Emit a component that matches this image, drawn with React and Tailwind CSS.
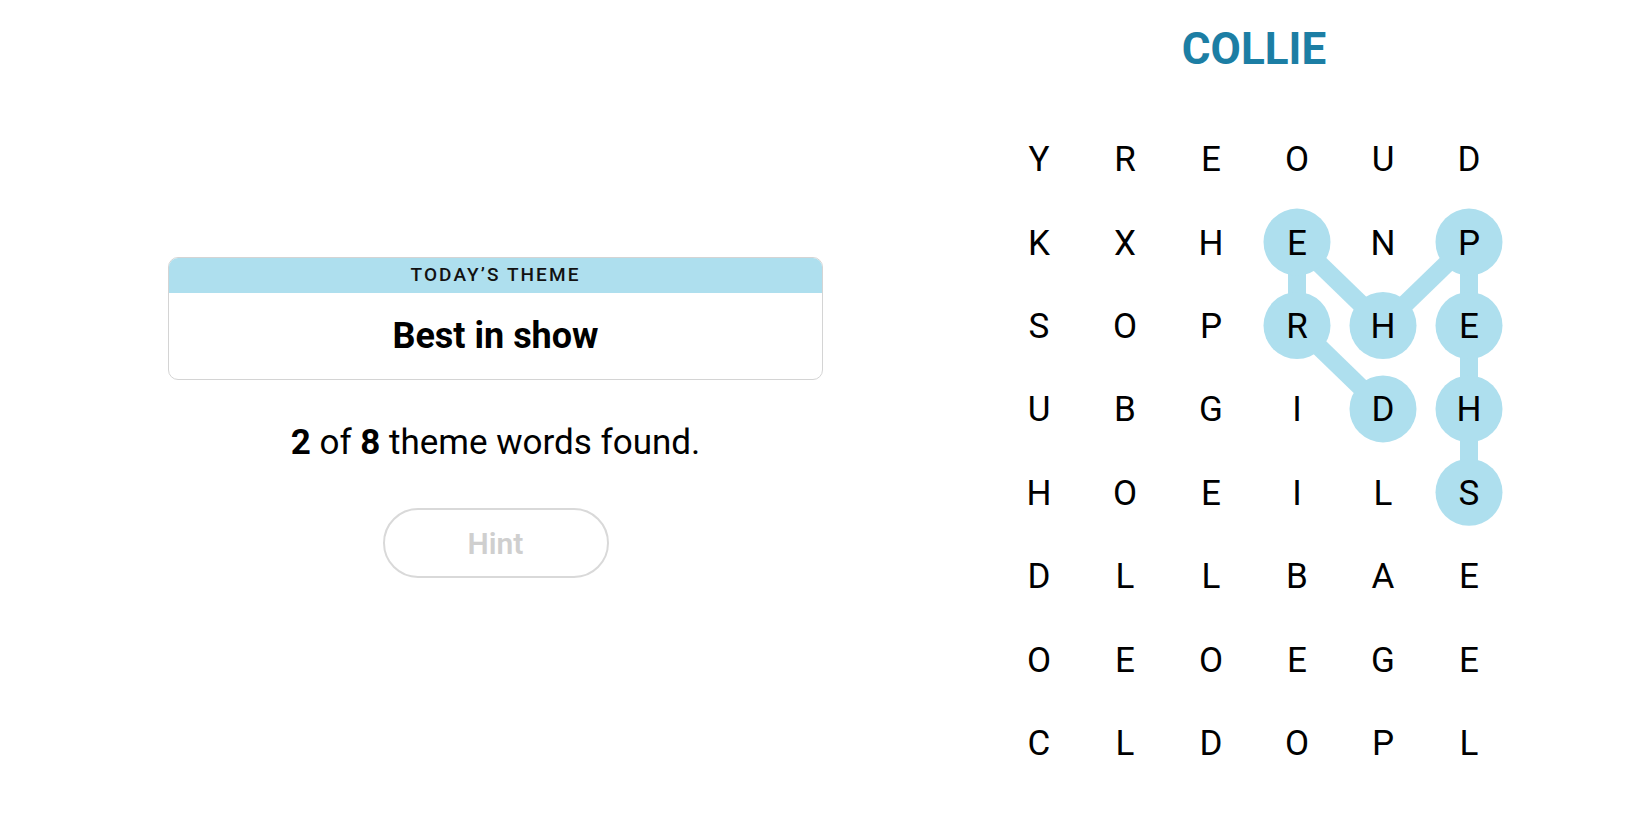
import React from "react";

const LETTERS = [
  "YREOUD",
  "KXHENP",
  "SOPRHE",
  "UBGIDH",
  "HOEILS",
  "DLLBAE",
  "OEOEGE",
  "CLDOPL",
];

const CW = 86;
const RH = 83.4;

// SHEPHERD path: [row, col]
const PATH = [
  [4, 5],
  [3, 5],
  [2, 5],
  [1, 5],
  [2, 4],
  [1, 3],
  [2, 3],
  [3, 4],
];

const cx = (c) => CW / 2 + CW * c;
const cy = (r) => RH / 2 + RH * r;

function Board() {
  return (
    <div className="relative w-[516px] h-[667px]">
      <svg
        className="absolute inset-0"
        width="516"
        height="667"
        viewBox="0 0 516 667"
      >
        {PATH.slice(1).map(([r, c], i) => {
          const [pr, pc] = PATH[i];
          return (
            <line
              key={i}
              x1={cx(pc)}
              y1={cy(pr) - 1}
              x2={cx(c)}
              y2={cy(r) - 1}
              stroke="#aedfee"
              strokeWidth="18"
            />
          );
        })}
        {PATH.map(([r, c], i) => (
          <circle key={i} cx={cx(c)} cy={cy(r) - 1} r="33.5" fill="#aedfee" />
        ))}
      </svg>
      <div className="relative grid grid-cols-[repeat(6,86px)] auto-rows-[83.4px]">
        {LETTERS.map((row, r) =>
          row.split("").map((ch, c) => (
            <div
              key={`${r}-${c}`}
              className="flex items-center justify-center text-[35px] leading-none text-black font-normal"
            >
              {ch}
            </div>
          ))
        )}
      </div>
    </div>
  );
}

export default function App() {
  return (
    <div className="w-[1650px] h-[825px] bg-white flex font-['Roboto',sans-serif] overflow-hidden">
      <div className="w-[991px] flex flex-col items-center pt-[257px]">
        <div className="w-[655px] rounded-[10px] border border-[#d4d4d4] overflow-hidden">
          <div className="h-[35px] bg-[#aedfee] flex items-center justify-center text-[19px] font-medium tracking-[0.11em] text-[#121212]">
            TODAY’S THEME
          </div>
          <div className="h-[86px] flex items-center justify-center text-[36px] font-bold text-black">
            Best in show
          </div>
        </div>
        <div className="mt-[42px] leading-[42px] text-[35px] text-black">
          <span className="font-bold">2</span> of <span className="font-bold">8</span> theme words found.
        </div>
        <button className="mt-[44px] w-[226px] h-[70px] rounded-full border-2 border-[#d9d9d9] text-[#cfcfcf] text-[30px] font-semibold flex items-center justify-center bg-white">
          Hint
        </button>
      </div>
      <div className="w-[526px] flex flex-col items-center pt-[23px]">
        <div className="h-[53px] leading-[53px] text-[44px] font-bold text-[#1c7ea4]">
          COLLIE
        </div>
        <div className="mt-[42px]">
          <Board />
        </div>
      </div>
    </div>
  );
}
